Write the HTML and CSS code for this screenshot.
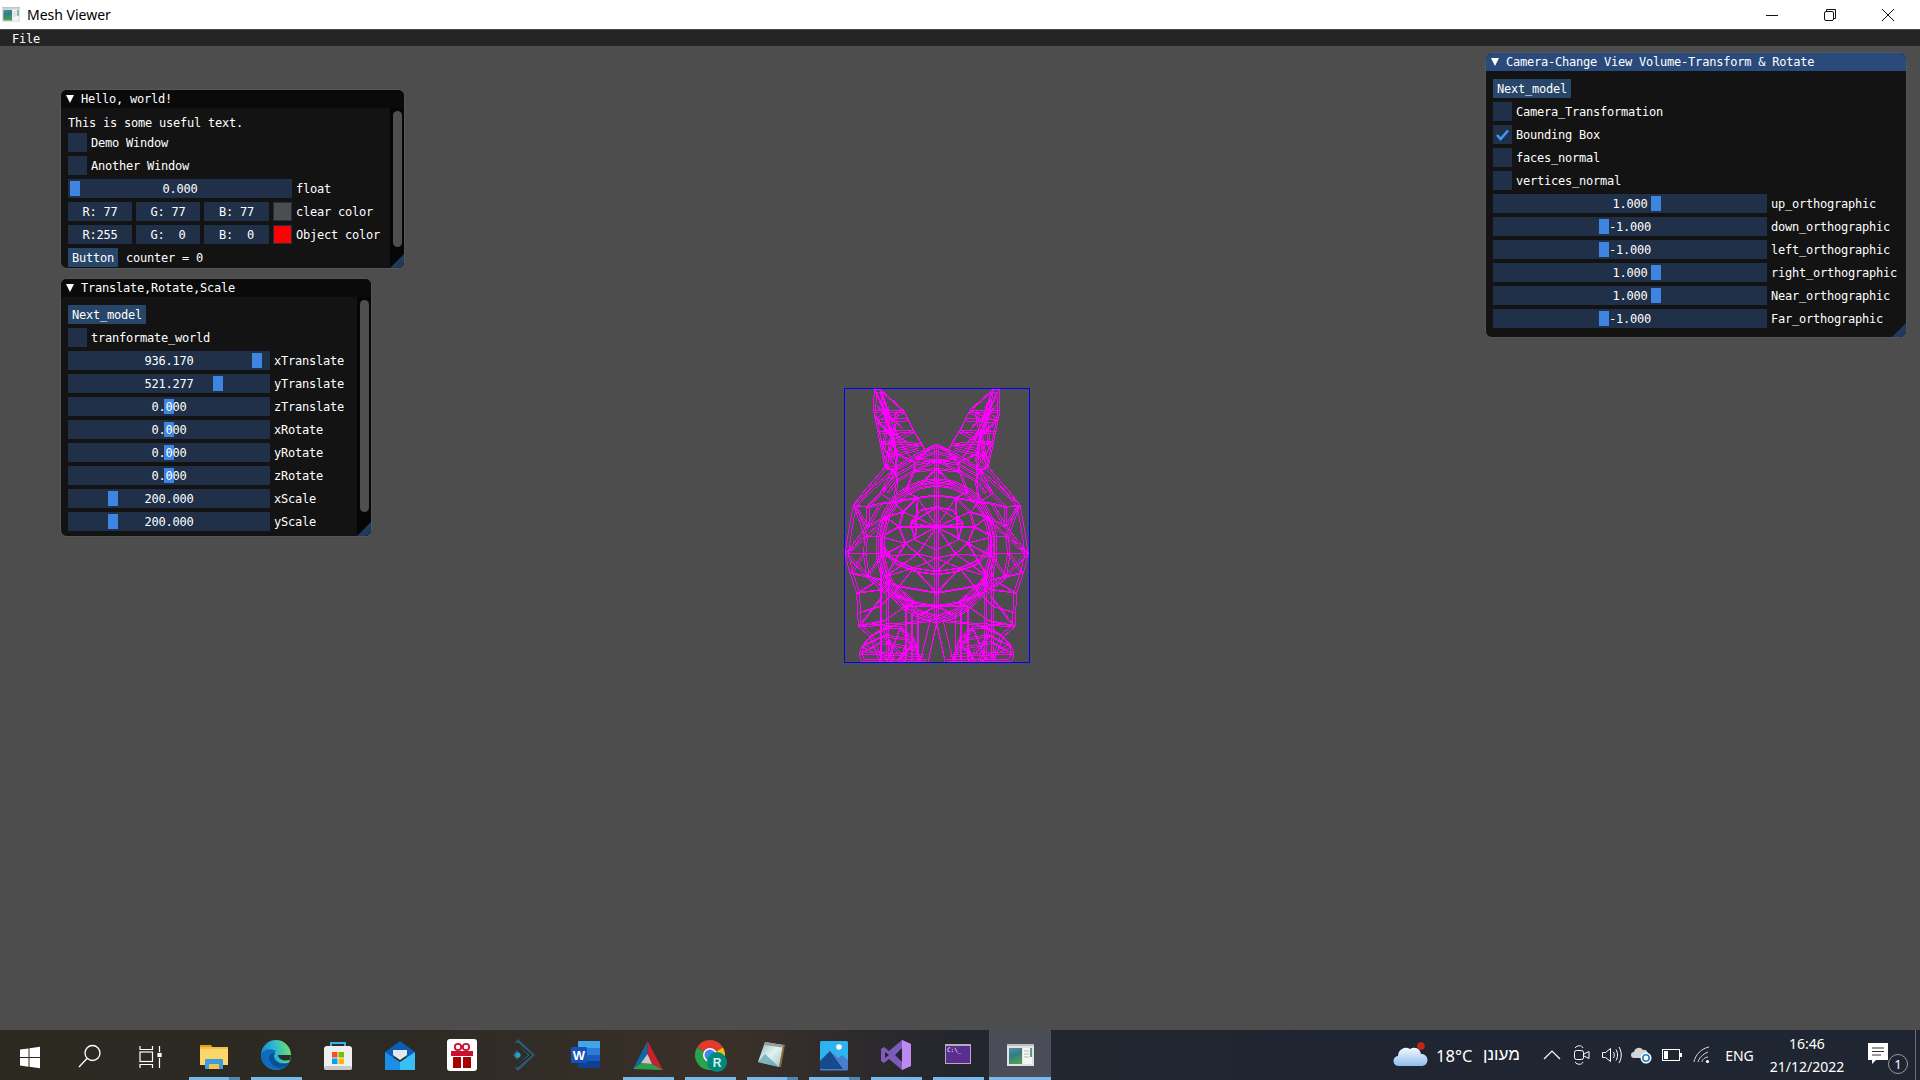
FILE: index.html
```html
<!DOCTYPE html>
<html lang="en">
<head>
<meta charset="utf-8">
<title>Mesh Viewer</title>
<link rel="stylesheet" href="styles.css">
</head>
<body>
<svg class="defs" width="0" height="0">
  <defs>
    <linearGradient id="appimg" x1="0" y1="0" x2="0.3" y2="1"><stop offset="0" stop-color="#5f8f9f"/><stop offset="0.5" stop-color="#2f7f86"/><stop offset="1" stop-color="#4f9a5a"/></linearGradient>
    <linearGradient id="edgeg" x1="0" y1="0.6" x2="1" y2="0.3"><stop offset="0" stop-color="#1384d0"/><stop offset="0.5" stop-color="#2bb8d0"/><stop offset="1" stop-color="#6fe06a"/></linearGradient>
    <linearGradient id="noteg" x1="0" y1="0" x2="1" y2="1"><stop offset="0" stop-color="#7fb8bf"/><stop offset="0.5" stop-color="#e4f2f2"/><stop offset="1" stop-color="#9fc6cc"/></linearGradient>
    <linearGradient id="cloudg" x1="0" y1="0" x2="0" y2="1"><stop offset="0" stop-color="#f4f8fd"/><stop offset="1" stop-color="#8fbdec"/></linearGradient>
    <symbol id="appicon" viewBox="0 0 27 22">
      <rect x="0" y="0" width="27" height="22" fill="#e2e2e2"/>
      <rect x="0" y="0" width="27" height="2" fill="#bdbdbd"/>
      <rect x="2" y="4" width="13" height="16" fill="url(#appimg)"/>
      <rect x="16" y="4" width="9" height="16" fill="#f6f6f6"/>
      <rect x="23" y="4" width="2" height="9" fill="#4f9a8a"/>
      <path d="M17 7h5M17 10h5M17 13h5" stroke="#b8b8b8" stroke-width="1"/>
    </symbol>
    <g id="halfmesh">
      <path d="M133 27L130 90L150 190L165 262M150 27L220 90L250 150L275 190L285 212M133 27L150 27L160 100L190 180L197 260M133 27L185 150L200 240M150 27L178 110L220 90M130 90L220 90M135 120L232 115M132 105L190 180M140 155L250 150M148 185L275 190M150 190L190 180L250 150M165 262L200 205L275 190M140 155L185 150L165 262M150 190L197 260M185 150L240 230M160 100L135 120"/>
      <path d="M320 192L262 220L197 260L165 262L110 325L70 375M320 215L255 232L190 270L130 320L70 375M320 240L255 250L195 285L150 340L110 380L70 375M320 265L250 272L200 300L170 340M285 212L255 250L250 272L225 335M320 192L255 232L320 240L250 272L320 265L270 312L320 305M197 260L195 285L200 300L190 365M165 262L190 270L150 340L190 365M190 270L200 300L250 272"/>
      <path d="M320 305L270 312L225 335L190 365L165 410L150 470L150 530L165 590L190 640L225 680L270 705L320 720M320 315L272 322L232 342L198 372L172 415L158 470L158 528L172 585L198 632L232 672L272 696L320 710M320 296L265 304L215 330L180 360L155 408L140 470L140 535L155 595L182 648L220 688L268 715L320 730"/>
      <path d="M150 490L190 540L250 565L320 575M155 510L195 552L255 575L320 585M130 600L195 650L255 670L320 680M160 610L230 625L320 640M320 345L262 352L218 395L205 440L225 490L262 522L320 535M320 380L270 390L240 430L255 480L320 510"/>
      <path d="M320 440L262 352M320 440L218 395M320 440L205 440M320 440L225 490M320 440L262 522M320 440L240 430M165 410L218 395L190 365L262 352L225 335M165 410L205 440L150 470L225 490L150 530L262 522L165 590L250 565L190 640M320 535L250 565M320 575L262 522M190 640L255 670L225 680L320 680L270 705M165 590L255 670M225 490L165 590M250 565L320 640L230 625M255 480L262 352M240 430L320 380"/>
      <path d="M70 375L58 440L45 522L60 580L80 640L83 700L85 740L120 770L95 800L88 825L95 845M70 375L110 380L150 370L190 365M70 375L105 470L45 522L110 440L70 375M105 470L150 430L165 410M110 380L110 440L150 370M110 440L165 410M105 470L140 470M45 522L100 520L150 520M100 520L105 470M45 522L110 590L165 640M60 580L150 600M100 520L110 590L150 530M100 520L60 580M80 640L130 610L110 590M80 640L155 630M80 640L85 740L155 650M83 700L150 680L182 648M85 740L160 725L225 680M85 740L200 735L300 725M120 770L200 735"/>
      <path d="M150 560V845M170 590V845M245 700V845M262 705V845M300 725L270 845M320 730L295 845M120 770L160 745L210 745L250 780L270 845M95 800L160 770L230 780L265 830M88 825L150 790L250 810M88 822L280 830M95 845L290 845M120 770L150 845M95 800L190 845M160 745L190 845M210 745L170 845M230 780L210 845M160 770L225 845M210 745L245 800L200 845M225 680V845M320 192V745M314 205V720"/>
    </g>
    <g id="earmesh">
      <path d="M150 60L210 180M170 70L160 200M200 90L175 230M145 130L230 185M138 75L215 140M160 230L265 205M185 215L255 245"/>
    </g>
    <g id="fullmesh">
      <use href="#halfmesh"/>
      <use href="#earmesh"/>
      <use href="#halfmesh" transform="translate(640 0) scale(-1 1)"/>
      <use href="#earmesh" transform="translate(640 0) scale(-1 1)"/>
    </g>
  </defs>
</svg>

<div class="app">
  <header class="titlebar">
    <svg class="title-icon" width="18" height="15"><use href="#appicon"/></svg>
    <span class="title-text">Mesh Viewer</span>
    <div class="controls">
      <div class="ctl"><svg width="14" height="14" viewBox="0 0 14 14"><path d="M1 7.500h12" stroke="#111"/></svg></div>
      <div class="ctl"><svg width="14" height="14" viewBox="0 0 14 14" fill="none" stroke="#111"><path d="M3.500 3V1.500h9v9H11"/><rect x="1.500" y="3.500" width="9" height="9" rx="1.500"/></svg></div>
      <div class="ctl"><svg width="14" height="14" viewBox="0 0 14 14"><path d="M1 1l12 12M13 1L1 13" stroke="#111"/></svg></div>
    </div>
  </header>
  <nav class="menubar mono"><span class="menu-item">File</span></nav>

  <main class="stage mono">
    <section class="win win-hello">
      <div class="win-title"><i class="tri"></i>Hello, world!</div>
      <div class="win-body">
        <div class="line">This is some useful text.</div>
        <div class="row"><i class="check"></i><span class="label">Demo Window</span></div>
        <div class="row"><i class="check"></i><span class="label">Another Window</span></div>
        <div class="row"><div class="frame w224"><i class="grab" style="left:2px"></i><span class="val">0.000</span></div><span class="label">float</span></div>
        <div class="row"><div class="frame w64">R: 77</div><div class="frame w64">G: 77</div><div class="frame w65">B: 77</div><i class="swatch swatch-grey"></i><span class="label">clear color</span></div>
        <div class="row"><div class="frame w64">R:255</div><div class="frame w64">G:  0</div><div class="frame w65">B:  0</div><i class="swatch swatch-red"></i><span class="label">Object color</span></div>
        <div class="row"><div class="btn">Button</div><span class="label counter">counter = 0</span></div>
      </div>
      <div class="scroll"><i class="thumb thumb-hello"></i></div>
      <i class="grip"></i>
    </section>

    <section class="win win-trs">
      <div class="win-title"><i class="tri"></i>Translate,Rotate,Scale</div>
      <div class="win-body">
        <div class="row"><div class="btn">Next_model</div></div>
        <div class="row"><i class="check"></i><span class="label">tranformate_world</span></div>
        <div class="row"><div class="frame w202"><i class="grab" style="left:184px"></i><span class="val">936.170</span></div><span class="label">xTranslate</span></div>
        <div class="row"><div class="frame w202"><i class="grab" style="left:145px"></i><span class="val">521.277</span></div><span class="label">yTranslate</span></div>
        <div class="row"><div class="frame w202"><i class="grab" style="left:96px"></i><span class="val">0.000</span></div><span class="label">zTranslate</span></div>
        <div class="row"><div class="frame w202"><i class="grab" style="left:96px"></i><span class="val">0.000</span></div><span class="label">xRotate</span></div>
        <div class="row"><div class="frame w202"><i class="grab" style="left:96px"></i><span class="val">0.000</span></div><span class="label">yRotate</span></div>
        <div class="row"><div class="frame w202"><i class="grab" style="left:96px"></i><span class="val">0.000</span></div><span class="label">zRotate</span></div>
        <div class="row"><div class="frame w202"><i class="grab" style="left:40px"></i><span class="val">200.000</span></div><span class="label">xScale</span></div>
        <div class="row"><div class="frame w202"><i class="grab" style="left:40px"></i><span class="val">200.000</span></div><span class="label">yScale</span></div>
      </div>
      <div class="scroll"><i class="thumb thumb-trs"></i></div>
      <i class="grip"></i>
    </section>

    <section class="win win-cam">
      <div class="win-title active"><i class="tri"></i>Camera-Change View Volume-Transform &amp; Rotate</div>
      <div class="win-body">
        <div class="row"><div class="btn">Next_model</div></div>
        <div class="row"><i class="check"></i><span class="label">Camera_Transformation</span></div>
        <div class="row"><i class="check"><svg width="19" height="19" viewBox="0 0 19 19"><path d="M4 10l3.600 4L15 5.500" fill="none" stroke="#4296fa" stroke-width="2.600"/></svg></i><span class="label">Bounding Box</span></div>
        <div class="row"><i class="check"></i><span class="label">faces_normal</span></div>
        <div class="row"><i class="check"></i><span class="label">vertices_normal</span></div>
        <div class="row"><div class="frame w274"><i class="grab" style="left:158px"></i><span class="val">1.000</span></div><span class="label">up_orthographic</span></div>
        <div class="row"><div class="frame w274"><i class="grab" style="left:106px"></i><span class="val">-1.000</span></div><span class="label">down_orthographic</span></div>
        <div class="row"><div class="frame w274"><i class="grab" style="left:106px"></i><span class="val">-1.000</span></div><span class="label">left_orthographic</span></div>
        <div class="row"><div class="frame w274"><i class="grab" style="left:158px"></i><span class="val">1.000</span></div><span class="label">right_orthographic</span></div>
        <div class="row"><div class="frame w274"><i class="grab" style="left:158px"></i><span class="val">1.000</span></div><span class="label">Near_orthographic</span></div>
        <div class="row"><div class="frame w274"><i class="grab" style="left:106px"></i><span class="val">-1.000</span></div><span class="label">Far_orthographic</span></div>
      </div>
      <i class="grip"></i>
    </section>

    <svg class="mesh" width="210" height="290" viewBox="0 0 630 870">
      <g class="wire">
        <use href="#fullmesh"/>
        <use href="#fullmesh" transform="translate(320 500) scale(0.965 0.98) translate(-320 -500)"/>
      </g>
      <rect class="bbox" x="43" y="25" width="555" height="822"/>
    </svg>
  </main>

  <footer class="taskbar">
    <div class="cell-sys"><svg width="32" height="32" viewBox="0 0 32 32" fill="#fff"><path d="M6 10.600l8.500-1.200V18H6zM15.500 9.200L26 7.700V18H15.500zM6 19h8.500v8.700L6 26.500zM15.500 19H26v10.300l-10.500-1.500z"/></svg></div>
    <div class="cell-sys"><svg width="32" height="32" viewBox="0 0 32 32" fill="none" stroke="#fff" stroke-width="1.300"><circle cx="18.500" cy="14" r="7.500"/><path d="M13 19.500L5 28"/></svg></div>
    <div class="cell-sys"><svg width="32" height="32" viewBox="0 0 32 32" fill="none" stroke="#fff" stroke-width="1.200"><path d="M6 7v3.500h12.500V7M6 29v-3.500h12.500V29"/><rect x="6" y="13" width="12.500" height="9.500"/><path d="M25.500 7v6M25.500 19v10"/><rect x="24" y="14.500" width="3" height="3" fill="#fff"/></svg></div>
    <div class="apps">
      <div class="app-cell run-stack"><svg width="32" height="32" viewBox="0 0 32 32"><path d="M2 6h11l2 3H2z" fill="#e6a100"/><rect x="2" y="8" width="28" height="18" fill="#fbd668"/><rect x="2" y="8" width="28" height="2" fill="#f2c04a"/><path d="M7 30v-9a1 1 0 0 1 1-1h16a1 1 0 0 1 1 1v9h-4v-5H11v5z" fill="#3f9be0"/><rect x="11" y="25" width="10" height="5" fill="#f3c64a"/></svg></div>
      <div class="app-cell run"><svg width="32" height="32" viewBox="0 0 32 32"><circle cx="16" cy="16" r="15" fill="url(#edgeg)"/><path d="M1 16C2 26 9 31 16 31c6 0 11-3 14-8-4 2-9 2-12 0-5-3-5-8-2-11-6-3-14-1-15 4z" fill="#0f6cbd"/><path d="M9 19c1 6 6 10 12 10 4-1 7-3 9-6-4 2-9 2-12 0-4-2-5-6-3-9-3 0-6 2-6 5z" fill="#0b4f95"/><path d="M18 16h13c0 2-1 4-1 5-4 1-11 1-12-5z" fill="#2c2a26"/></svg></div>
      <div class="app-cell"><svg width="32" height="32" viewBox="0 0 32 32"><path d="M9 9V4h14v5" fill="none" stroke="#36b1ee" stroke-width="2"/><rect x="2" y="7" width="28" height="24" rx="3" fill="#efefef"/><rect x="2" y="27" width="28" height="4" rx="2" fill="#c9c9c9"/><rect x="10" y="13" width="5.500" height="5.500" fill="#f25022"/><rect x="16.500" y="13" width="5.500" height="5.500" fill="#7fba00"/><rect x="10" y="19.500" width="5.500" height="5.500" fill="#00a4ef"/><rect x="16.500" y="19.500" width="5.500" height="5.500" fill="#ffb900"/></svg></div>
      <div class="app-cell"><svg width="32" height="32" viewBox="0 0 32 32"><path d="M1 13L16 2l15 11v5H1z" fill="#0a5fb4"/><path d="M9 11h14v5l-7 5-7-5z" fill="#e4e9ef"/><path d="M1 13l15 10v8H1z" fill="#1b8fe8"/><path d="M31 13L16 23v8h15z" fill="#38c0f5"/></svg></div>
      <div class="app-cell"><svg width="32" height="32" viewBox="0 0 32 32"><rect x="1" y="0" width="30" height="32" rx="3" fill="#fff"/><circle cx="12" cy="8" r="3.200" fill="none" stroke="#c8102e" stroke-width="1.800"/><circle cx="20" cy="8" r="3.200" fill="none" stroke="#c8102e" stroke-width="1.800"/><rect x="5" y="12" width="22" height="5" fill="#c8102e"/><rect x="7" y="18" width="8" height="11" fill="#a80000"/><rect x="17" y="18" width="8" height="11" fill="#a80000"/></svg></div>
      <div class="app-cell"><svg width="32" height="32" viewBox="0 0 32 32"><path d="M10 0l17 16-17 16-3-3 13-13L7 3z" fill="#33586b"/><path d="M9 4l14 12L9 28" fill="none" stroke="#16222a" stroke-width="1.200"/><path d="M5 16l4-5 3 5-3 5z" fill="#3a5e70"/><circle cx="10" cy="16" r="2.600" fill="#22a6cf"/></svg></div>
      <div class="app-cell"><svg width="32" height="32" viewBox="0 0 32 32"><rect x="8" y="2" width="22" height="27" rx="1" fill="#185abd"/><rect x="8" y="2" width="22" height="7" fill="#41a5ee"/><rect x="8" y="9" width="22" height="7" fill="#2b7cd3"/><rect x="8" y="22" width="22" height="7" fill="#103f91"/><rect x="1" y="8" width="16" height="16" rx="1" fill="#1553b8"/><text class="word-w" x="9" y="21">W</text></svg></div>
      <div class="app-cell run"><svg width="32" height="32" viewBox="0 0 32 32"><path d="M15.500 2V15L9 24 1 30z" fill="#1068a8"/><path d="M15.500 2L31 31l-11-6-4.500-10z" fill="#c8202e"/><path d="M1 30l30 1-11-6-11-1z" fill="#2f9e4a"/><path d="M15.500 15L20 25 9 24z" fill="#c8c8c8"/></svg></div>
      <div class="app-cell run"><svg width="34" height="34" viewBox="0 0 34 34"><path d="M17 17L4 9.500A15 15 0 0 1 30 9.500z" fill="#dd3c2e"/><path d="M17 17L30 9.500A15 15 0 0 1 17 32z" fill="#f4c20d"/><path d="M17 17L17 32A15 15 0 0 1 4 9.500z" fill="#2aa34a"/><circle cx="17" cy="17" r="7" fill="#fff"/><circle cx="17" cy="17" r="5.500" fill="#3f86ea"/><circle cx="24" cy="24" r="10" fill="#00897b"/><text class="badge-r" x="24" y="28.500">R</text></svg></div>
      <div class="app-cell run-stack"><svg width="32" height="32" viewBox="0 0 32 32"><path d="M27 5l2 1-4 22h-2z" fill="#8a6a30"/><path d="M9 3l18 3-4 22-21-5z" fill="url(#noteg)"/><path d="M2 23l7-8 14 13z" fill="#3f93a0" opacity="0.6"/><path d="M9 3l18 3-.5 2.500L8.500 6z" fill="#9a9a9a"/></svg></div>
      <div class="app-cell run-stack"><svg width="32" height="32" viewBox="0 0 32 32"><rect x="2" y="2" width="28" height="28" rx="1.500" fill="#2db4ee"/><circle cx="21" cy="8" r="2.800" fill="#fff"/><path d="M2 22l10-10 8 7 4-3 6 5v9a1.500 1.500 0 0 1-1.500 1.500h-25A1.500 1.500 0 0 1 2 30z" fill="#4a7fd0"/><path d="M2 22l10-10 13 18H3.500A1.500 1.500 0 0 1 2 28.500z" fill="#174a8c"/></svg></div>
      <div class="app-cell run"><svg width="32" height="32" viewBox="0 0 32 32"><path d="M22 1l9 4v22l-9 4L9 20l-5 4-3-2V10l3-2 5 4z" fill="#7f5bb8"/><path d="M22 1l9 4v22l-9 4z" fill="#bd8bef"/><path d="M22 9l-7 7 7 7z" fill="#232633"/><path d="M5 13l4 3-4 3z" fill="#232633"/></svg></div>
      <div class="app-cell run"><svg width="32" height="32" viewBox="0 0 32 32"><rect x="3" y="5" width="26" height="20" fill="#b0b0b0"/><rect x="4" y="7" width="24" height="17" fill="#5a2d91"/><text class="cmd-t" x="5" y="13">C:\_</text></svg></div>
      <div class="app-cell run-active"><svg class="app-big" width="27" height="22"><use href="#appicon"/></svg></div>
    </div>

    <div class="tray">
      <div class="weather">
        <svg class="cloud" width="36" height="26" viewBox="0 0 36 26"><path d="M7 24a5 5 0 0 1-1-10 8 8 0 0 1 12-7 7 7 0 0 1 11 5 6 6 0 0 1 1 12z" fill="url(#cloudg)"/><circle cx="29" cy="4" r="3.800" fill="#c8231e"/></svg>
        <span class="temp">18°C</span>
        <span class="cond" dir="rtl">מעונן</span>
      </div>
      <div class="tray-ico"><svg width="20" height="12" viewBox="0 0 20 12"><path d="M2 10l8-8 8 8" fill="none" stroke="#fff" stroke-width="1.200"/></svg></div>
      <div class="tray-ico"><svg width="18" height="24" viewBox="0 0 18 24" fill="none" stroke="#fff"><rect x="1.500" y="7.500" width="9" height="9" rx="2"/><path d="M11 11l5-2.500v7L11 13M2 5c2-3 7-3 8 0M2 19c2 3 7 3 8 0"/></svg></div>
      <div class="tray-ico"><svg width="22" height="20" viewBox="0 0 22 20" fill="none" stroke="#fff"><path d="M1.500 7.500h3L9.500 3.500v13l-5-4h-3zM12.500 7c1 2 1 4 0 6M15 4.500c2 3.500 2 7.500 0 11M18 2c3 5 3 11 0 16"/></svg></div>
      <div class="tray-ico"><svg width="22" height="18" viewBox="0 0 22 18"><path d="M3 12a3 3 0 0 1 0-6 5 5 0 0 1 9-2 4 4 0 0 1 5 4v4z" fill="#d5d5d5"/><circle cx="15" cy="12" r="5.500" fill="#fff"/><circle cx="15" cy="12" r="3.200" fill="none" stroke="#1a7fd0" stroke-width="1.600"/></svg></div>
      <div class="tray-ico"><svg width="20" height="12" viewBox="0 0 20 12"><rect x="0.500" y="0.500" width="17" height="11" fill="none" stroke="#fff"/><rect x="2" y="2" width="4" height="8" fill="#fff"/><rect x="18" y="4" width="2" height="4" fill="#fff"/></svg></div>
      <div class="tray-ico"><svg width="18" height="18" viewBox="0 0 18 18" fill="none" stroke="#ddd"><path d="M1 16C2 9 9 2 16 1M5 16c1-4 5-8 10-10M9 16c0-2 3-5 6-5"/><circle cx="14.500" cy="15.500" r="1.600" fill="#fff" stroke="none"/></svg></div>
      <div class="eng">ENG</div>
      <div class="clock"><span>16:46</span><span>21/12/2022</span></div>
      <div class="notif"><svg width="26" height="26" viewBox="0 0 26 26"><path d="M1 1h20v17H9l-4 4v-4H1z" fill="#fff"/><path d="M5 6h12M5 9.500h12M5 13h9" stroke="#333"/></svg><span class="notif-badge">1</span></div>
      <i class="show-desktop"></i>
    </div>
  </footer>
</div>
</body>
</html>
```
FILE: styles.css
```css
* { box-sizing: border-box; }
html, body { margin: 0; padding: 0; }
body { width: 1920px; height: 1080px; overflow: hidden; font-family: "Noto Sans", sans-serif; }
.defs { position: absolute; }
.app { display: flex; flex-direction: column; height: 1080px; }
.mono { font-family: "DejaVu Sans Mono", "Liberation Mono", monospace; font-size: 12px; letter-spacing: -0.22px; color: #fff; line-height: 13px; }
.line, .label, .frame, .btn, .win-title { white-space: pre; }

.titlebar { height: 30px; flex: none; background: #fff; border-bottom: 1px solid #4a4a4a; display: flex; align-items: center; padding-left: 2px; font-size: 14px; color: #000; }
.title-icon { margin-right: 7px; }
.controls { margin-left: auto; display: flex; padding-right: 3px; }
.ctl { width: 58px; height: 29px; display: flex; align-items: center; justify-content: center; }

.menubar { height: 16px; flex: none; background: #242424; display: flex; align-items: center; padding: 2px 0 0 12px; }

.stage { flex: 1; position: relative; background: #4d4d4d; overflow: hidden; }

.win { position: absolute; background: #131313; border: 1px solid #55555c; border-radius: 7px; overflow: hidden; }
.win-hello { left: 60px; top: 43px; width: 345px; height: 180px; }
.win-trs { left: 60px; top: 232px; width: 312px; height: 259px; }
.win-cam { left: 1485px; top: 6px; width: 422px; height: 286px; }
.win-title { height: 18px; background: #0a0a0a; display: flex; align-items: center; padding-left: 20px; position: relative; }
.win-title.active { background: #294a7a; }
.tri { position: absolute; left: 5px; top: 5px; width: 0; height: 0; border-left: 4.5px solid transparent; border-right: 4.5px solid transparent; border-top: 8px solid #fff; }
.win-body { display: flex; flex-direction: column; gap: 4px; padding: 8px 0 0 7px; }
.line { height: 13px; padding-top: 1px; }
.row { display: flex; align-items: center; gap: 4px; height: 19px; }
.check { display: block; width: 19px; height: 19px; background: #203049; flex: none; }
.check svg { display: block; }
.label { padding-top: 2px; }
.counter { margin-left: 4px; }
.frame { position: relative; height: 19px; padding-top: 2px; background: #203049; display: flex; align-items: center; justify-content: center; flex: none; }
.w64 { width: 64px; }
.w65 { width: 65px; }
.w202 { width: 202px; }
.w224 { width: 224px; }
.w274 { width: 274px; }
.grab { position: absolute; top: 2px; width: 10px; height: 15px; background: #3d85e0; }
.val { position: relative; }
.swatch { display: block; width: 19px; height: 19px; flex: none; border: 1px solid #203049; }
.swatch-grey { background: #4d4d4d; }
.swatch-red { background: #ff0000; }
.btn { height: 19px; padding: 2px 4px 0; background: #274669; display: flex; align-items: center; flex: none; }

.scroll { position: absolute; right: 0; top: 18px; bottom: 0; width: 14px; background: #060606; padding: 3px 2px 0 3px; }
.thumb { display: block; background: #4f4f4f; border-radius: 5px; width: 9px; }
.thumb-hello { height: 136px; }
.thumb-trs { height: 212px; }
.grip { position: absolute; right: 0; bottom: 0; width: 14px; height: 14px; background: #1f3a5b; clip-path: polygon(100% 0, 100% 100%, 0 100%); }

.mesh { position: absolute; left: 830px; top: 334px; }
.wire { fill: none; stroke: #ff00ff; stroke-width: 3; shape-rendering: crispEdges; }
.bbox { fill: none; stroke: #0000ff; stroke-width: 3; shape-rendering: crispEdges; }

.taskbar { height: 50px; flex: none; display: flex; align-items: center; background: linear-gradient(90deg, #2b2920 0%, #2c2a24 20%, #3a3029 38%, #23262e 50%, #1f2531 70%, #1f2531 100%); color: #fff; }
.cell-sys { width: 60px; height: 50px; display: flex; align-items: center; justify-content: center; flex: none; }
.apps { display: flex; margin-left: 3px; height: 50px; }
.app-cell { width: 62px; height: 50px; display: flex; align-items: center; justify-content: center; position: relative; flex: none; }
.run::after, .run-stack::after, .run-active::after { content: ""; position: absolute; bottom: 0; left: 6px; width: 51px; height: 3px; background: #76b9ed; }
.run-stack::before { content: ""; position: absolute; bottom: 0; left: 46px; width: 11px; height: 3px; background: #4f87b4; z-index: 1; }
.run-active { background: #4a4d58; }
.run-active::after { left: 0; width: 62px; }
.word-w { font: 700 13px "Liberation Sans", sans-serif; fill: #fff; text-anchor: middle; }
.badge-r { font: 700 12px "Liberation Sans", sans-serif; fill: #d8f0ec; text-anchor: middle; }
.cmd-t { font: 6px "DejaVu Sans Mono", monospace; fill: #fff; }

.tray { margin-left: auto; display: flex; align-items: center; height: 50px; width: 528px; flex: none; position: relative; }
.weather { display: flex; align-items: center; width: 145px; flex: none; }
.cloud { margin-right: 8px; }
.temp { font-size: 16.5px; width: 47px; flex: none; }
.cond { font-family: "Liberation Sans", "DejaVu Sans", sans-serif; font-size: 17px; }
.tray-ico { width: 30px; height: 50px; display: flex; align-items: center; justify-content: center; flex: none; }
.eng { width: 45px; text-align: center; font-size: 14px; flex: none; }
.clock { width: 90px; display: flex; flex-direction: column; align-items: center; font-size: 14px; line-height: 23px; flex: none; }
.notif { width: 56px; height: 50px; flex: none; position: relative; display: flex; align-items: center; justify-content: center; }
.notif-badge { position: absolute; left: 36px; top: 24px; width: 20px; height: 20px; border-radius: 50%; background: #1f2531; border: 1px solid #9a9a9a; font: 13px/18px "Noto Sans", sans-serif; text-align: center; }
.show-desktop { position: absolute; right: 4px; top: 0; width: 1px; height: 50px; background: #6a6e78; }
```
